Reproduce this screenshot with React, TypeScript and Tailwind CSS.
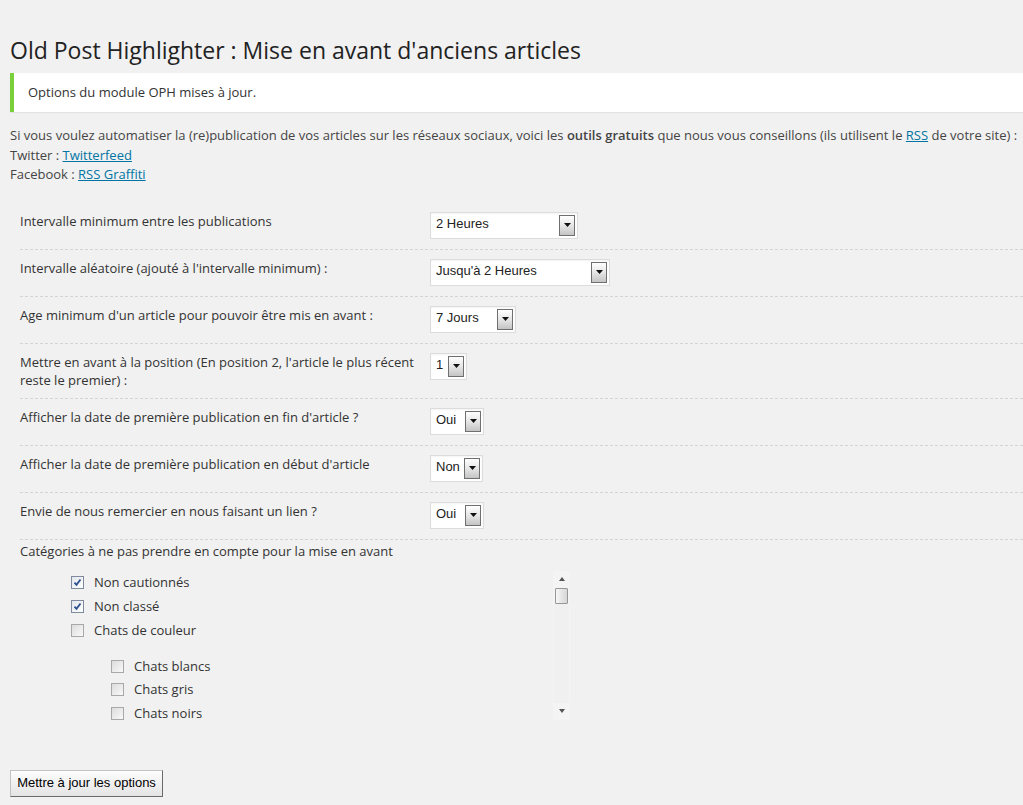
import React from "react";

type Option = {
  label: React.ReactNode;
  value: string;
  width: string;
  height: string;
};

const options: Option[] = [
  { label: "Intervalle minimum entre les publications", value: "2 Heures", width: "w-[148px]", height: "h-[47px]" },
  { label: "Intervalle aléatoire (ajouté à l'intervalle minimum) :", value: "Jusqu'à 2 Heures", width: "w-[180px]", height: "h-[47px]" },
  { label: "Age minimum d'un article pour pouvoir être mis en avant :", value: "7 Jours", width: "w-[86px]", height: "h-[47px]" },
  {
    label: "Mettre en avant à la position (En position 2, l'article le plus récent reste le premier) :",
    value: "1",
    width: "w-[37px]",
    height: "h-[55px]",
  },
  { label: "Afficher la date de première publication en fin d'article ?", value: "Oui", width: "w-[54px]", height: "h-[47px]" },
  { label: "Afficher la date de première publication en début d'article", value: "Non", width: "w-[53px]", height: "h-[47px]" },
  { label: "Envie de nous remercier en nous faisant un lien ?", value: "Oui", width: "w-[54px]", height: "h-[47px]" },
];

const categories = [
  { name: "Non cautionnés", checked: true },
  { name: "Non classé", checked: true },
  { name: "Chats de couleur", checked: false },
];

const subCategories = ["Chats blancs", "Chats gris", "Chats noirs"];

function SelectBox({ value, width }: { value: string; width: string }) {
  return (
    <div
      className={`${width} flex h-[27px] items-start justify-between border border-[#dcdcdc] bg-white pl-[5px] pr-[2px] font-['Liberation_Sans',Arial,sans-serif] text-[13px] text-[#222] shadow-[inset_0_1px_2px_rgba(0,0,0,0.05)]`}
    >
      <span className="whitespace-nowrap pt-[3px] leading-[16px]">{value}</span>
      <span className="mt-[2px] flex h-[21px] w-[16px] shrink-0 items-center justify-center border border-[#6f6f6f] bg-linear-to-b from-[#ffffff] via-[#e6e6e6] to-[#c4c4c4]">
        <svg width="7" height="4" viewBox="0 0 7 4">
          <path d="M0 0h7L3.5 4z" fill="#111" />
        </svg>
      </span>
    </div>
  );
}

function Checkbox({ checked }: { checked: boolean }) {
  return (
    <span
      className={`flex h-[13px] w-[13px] shrink-0 items-center justify-center border ${
        checked ? "border-[#7f8a9e] bg-linear-to-br from-[#e2e6ec] to-[#ffffff]" : "border-[#a8a8a8] bg-linear-to-br from-[#dcdcdc] to-[#f9f9f9]"
      }`}
    >
      {checked && (
        <svg width="9" height="9" viewBox="0 0 9 9">
          <path d="M1.5 4.6l2 2.2L7.5 1.5" stroke="#2b4f8f" strokeWidth="1.8" fill="none" />
        </svg>
      )}
    </span>
  );
}

function FakeScrollbar() {
  return (
    <div className="flex w-[17px] shrink-0 flex-col bg-[#f4f4f4]">
      <div className="flex h-[17px] items-center justify-center">
        <svg width="6" height="4" viewBox="0 0 6 4">
          <path d="M0 4h6L3 0z" fill="#555" />
        </svg>
      </div>
      <div className="mx-[2px] h-[16px] rounded-[1px] border border-[#969696] bg-linear-to-r from-[#f7f7f7] to-[#d6d6d6]" />
      <div className="mx-[1px] flex-1 bg-[#f0f0f0]" />
      <div className="flex h-[17px] items-center justify-center">
        <svg width="6" height="4" viewBox="0 0 6 4">
          <path d="M0 0h6L3 4z" fill="#555" />
        </svg>
      </div>
    </div>
  );
}

export default function App() {
  return (
    <main className="min-h-screen overflow-hidden bg-[#f1f1f1] font-['Open_Sans',sans-serif] text-[13px] text-[#444]">
      <div className="pl-[10px]">
        <h2 className="whitespace-nowrap pt-[36px] text-[23px] font-normal leading-[29px] text-[#222]">
          Old Post Highlighter : Mise en avant d'anciens articles
        </h2>

        <div className="mt-[8px] flex h-[39px] items-center border-l-4 border-[#7ad03a] bg-white pl-[14px] shadow-[0_1px_1px_rgba(0,0,0,0.06)]">
          <p className="text-[#333]">Options du module OPH mises à jour.</p>
        </div>

        <div className="mt-[14px] leading-[19.5px]">
          <p className="whitespace-nowrap">
            Si vous voulez automatiser la (re)publication de vos articles sur les réseaux sociaux, voici les{" "}
            <strong className="font-semibold">outils gratuits</strong> que nous vous conseillons (ils utilisent le{" "}
            <a href="#" className="text-[#0074a2] underline">RSS</a> de votre site) :
          </p>
          <p>
            Twitter : <a href="#" className="text-[#0074a2] underline">Twitterfeed</a>
          </p>
          <p>
            Facebook : <a href="#" className="text-[#0074a2] underline">RSS Graffiti</a>
          </p>
        </div>

        <div className="ml-[10px] mt-[18px]">
          {options.map((opt, i) => (
            <div key={i} className={`flex ${opt.height} border-b border-dashed border-[#d4d4d4]`}>
              <div className="w-[410px] shrink-0 pr-[10px] pt-[9px] leading-[18.5px] text-[#333]">{opt.label}</div>
              <div className="pt-[9px]">
                <SelectBox value={opt.value} width={opt.width} />
              </div>
            </div>
          ))}

          <div className="pt-[2px] leading-[19px] text-[#333]">Catégories à ne pas prendre en compte pour la mise en avant</div>

          <div className="ml-[40px] mt-[10px] flex h-[149px] w-[510px]">
            <div className="flex-1 pl-[11px] text-[#333]">
              {categories.map((c) => (
                <div key={c.name} className="flex h-[24px] items-center gap-[10px]">
                  <Checkbox checked={c.checked} />
                  <span>{c.name}</span>
                </div>
              ))}
              <div className="mt-[12px] pl-[40px]">
                {subCategories.map((s) => (
                  <div key={s} className="flex h-[23.5px] items-center gap-[10px]">
                    <Checkbox checked={false} />
                    <span>{s}</span>
                  </div>
                ))}
              </div>
            </div>
            <FakeScrollbar />
          </div>
        </div>

        <button className="mt-[50px] h-[27px] w-[153px] border border-[#c2c2c2] border-b-[#6a6a6a] border-r-[#6a6a6a] bg-linear-to-b from-[#fdfdfd] to-[#e4e4e4] font-['Liberation_Sans',Arial,sans-serif] text-[13px] text-black">
          Mettre à jour les options
        </button>
      </div>
    </main>
  );
}
